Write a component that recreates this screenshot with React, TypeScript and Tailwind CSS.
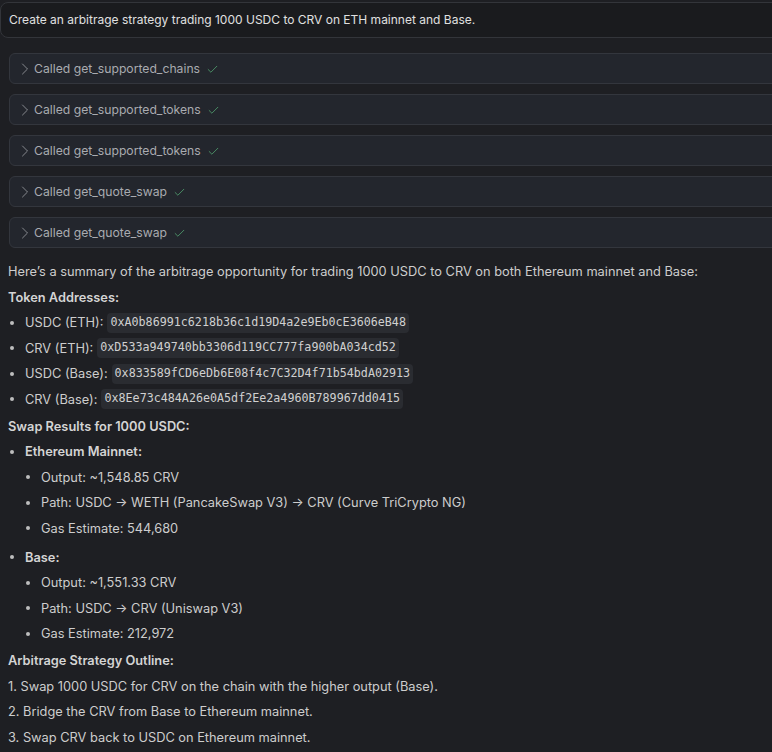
import { ChevronRight, Check } from "lucide-react";

const calls = [
  "get_supported_chains",
  "get_supported_tokens",
  "get_supported_tokens",
  "get_quote_swap",
  "get_quote_swap",
];

const addresses = [
  ["USDC (ETH):", "0xA0b86991c6218b36c1d19D4a2e9Eb0cE3606eB48"],
  ["CRV (ETH):", "0xD533a949740bb3306d119CC777fa900bA034cd52"],
  ["USDC (Base):", "0x833589fCD6eDb6E08f4c7C32D4f71b54bdA02913"],
  ["CRV (Base):", "0x8Ee73c484A26e0A5df2Ee2a4960B789967dd0415"],
];

function Bullet({ children, nested }: { children: React.ReactNode; nested?: boolean }) {
  return (
    <div className={`flex h-[25.5px] items-center ${nested ? "pl-[18px]" : "pl-[2px]"}`}>
      <span className="mr-[11px] h-[4px] w-[4px] rounded-full bg-[#bdbdbd]" />
      <div className="flex items-center">{children}</div>
    </div>
  );
}

function Line({ children, bold }: { children: React.ReactNode; bold?: boolean }) {
  return (
    <div className={`flex h-[25.5px] items-center ${bold ? "font-semibold text-[#d4d4d4]" : ""}`}>
      {children}
    </div>
  );
}

export default function App() {
  return (
    <div
      className="h-[752px] w-[772px] overflow-hidden bg-[#1e1f23] text-[12.8px] text-[#cdcdcd]"
      style={{ fontFamily: "Inter, 'Noto Sans', sans-serif" }}
    >
      <div className="pt-[2px]">
        <div className="-mr-4 flex h-[36px] items-center rounded-l-[8px] border border-[#33353a] bg-[#1a1b1e] pl-[8px] text-[12px] text-[#e0e0e0]">
          Create an arbitrage strategy trading 1000 USDC to CRV on ETH mainnet and Base.
        </div>
      </div>

      <div className="mt-[15px] flex flex-col gap-[10px] pl-[9px]">
        {calls.map((c, i) => (
          <div
            key={i}
            className="-mr-4 flex h-[31px] items-center rounded-l-[6px] border border-[#33363d] bg-[#23262d] pl-[5px] pt-[1px] text-[12.2px] text-[#a9abb0]"
          >
            <ChevronRight size={20} strokeWidth={1} className="text-[#9a9ca1]" />
            <span className="ml-[-1px]">Called {c}</span>
            <Check size={13} strokeWidth={1.6} className="ml-[6px] text-[#4f9a6c]" />
          </div>
        ))}
      </div>

      <div className="mt-[10px] pl-[8px] pt-[1px]">
        <Line>
          Here’s a summary of the arbitrage opportunity for trading 1000 USDC to CRV on both Ethereum mainnet and Base:
        </Line>
        <Line bold>Token Addresses:</Line>
        {addresses.map(([k, v]) => (
          <Bullet key={v}>
            <span>{k}</span>
            <code
              className="ml-[4px] rounded-[4px] bg-[#2a2c31] px-[3px] py-[1px] text-[11.7px] text-[#d0d0d0]"
              style={{ fontFamily: "'DejaVu Sans Mono', monospace" }}
            >
              {v}
            </code>
          </Bullet>
        ))}
        <div className="h-[1.5px]" />
        <Line bold>Swap Results for 1000 USDC:</Line>
        <Bullet>
          <span className="font-semibold text-[#d4d4d4]">Ethereum Mainnet:</span>
        </Bullet>
        <Bullet nested>Output: ~1,548.85 CRV</Bullet>
        <Bullet nested>Path: USDC → WETH (PancakeSwap V3) → CRV (Curve TriCrypto NG)</Bullet>
        <Bullet nested>Gas Estimate: 544,680</Bullet>
        <div className="h-[3.5px]" />
        <Bullet>
          <span className="font-semibold text-[#d4d4d4]">Base:</span>
        </Bullet>
        <Bullet nested>Output: ~1,551.33 CRV</Bullet>
        <Bullet nested>Path: USDC → CRV (Uniswap V3)</Bullet>
        <Bullet nested>Gas Estimate: 212,972</Bullet>
        <div className="h-[1.5px]" />
        <Line bold>Arbitrage Strategy Outline:</Line>
        <Line>1. Swap 1000 USDC for CRV on the chain with the higher output (Base).</Line>
        <Line>2. Bridge the CRV from Base to Ethereum mainnet.</Line>
        <Line>3. Swap CRV back to USDC on Ethereum mainnet.</Line>
      </div>
    </div>
  );
}
